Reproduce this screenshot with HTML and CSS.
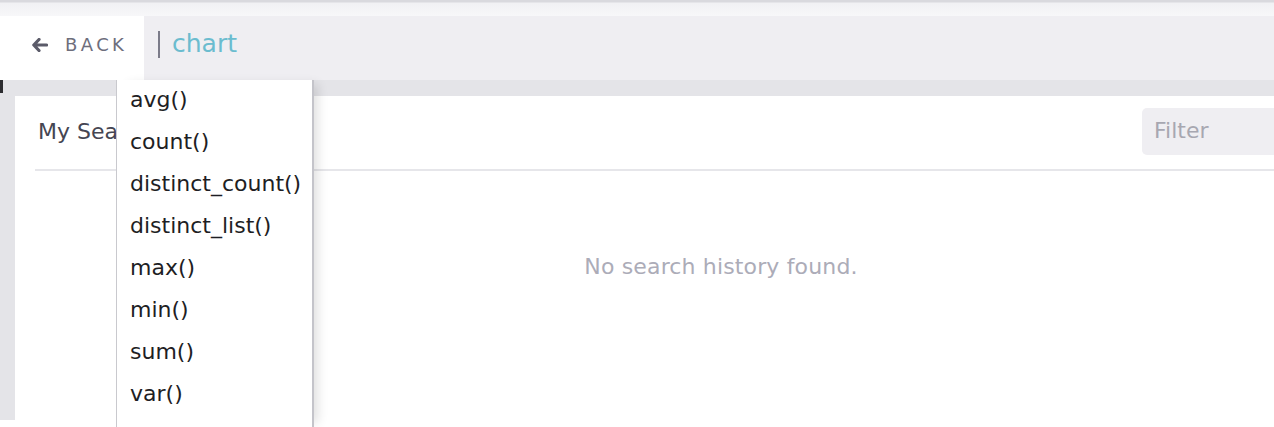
FILE: index.html
```html
<!DOCTYPE html>
<html>
<head>
<meta charset="utf-8">
<link rel="stylesheet" href="styles.css">
</head>
<body>
<div class="page">
  <div class="topstrip"></div>
  <header class="header">
    <div class="back">
      <svg class="back-icon" width="16" height="14" viewBox="0 0 16 14"><path d="M7 1.5 L1.8 7 L7 12.5 M2.5 7 H14.5" fill="none" stroke="#5b5b69" stroke-width="3.2" stroke-linecap="round" stroke-linejoin="round"/></svg>
      <span class="back-label">BACK</span>
    </div>
    <div class="search">
      <span class="caret"></span>
      <span class="query">chart</span>
    </div>
  </header>
  <main class="main">
    <section class="panel">
      <div class="panel-head">
        <h2 class="panel-title">My Searches</h2>
        <div class="filter">Filter</div>
      </div>
      <div class="empty">No search history found.</div>
    </section>
  </main>
  <div class="bottomstrip"></div>
  <ul class="dropdown">
    <li>avg()</li>
    <li>count()</li>
    <li>distinct_count()</li>
    <li>distinct_list()</li>
    <li>max()</li>
    <li>min()</li>
    <li>sum()</li>
    <li>var()</li>
  </ul>
</div>
</body>
</html>
```

FILE: styles.css
```css
html, body {
  margin: 0;
  padding: 0;
  overflow: hidden;
  background: #ffffff;
}
body {
  font-family: "DejaVu Sans", "Noto Sans", sans-serif;
  width: 1274px;
  height: 427px;
}
.page {
  position: relative;
  width: 1442px;
  height: 427px;
}
.topstrip {
  height: 16px;
  background: linear-gradient(#d9d9de 0, #d9d9de 2px, #f1f1f4 3px, #f7f7f9 16px);
}
.header {
  display: flex;
  height: 64px;
}
.back {
  width: 144px;
  box-sizing: border-box;
  padding: 0 0 7px 32px;
  display: flex;
  align-items: center;
  background: #ffffff;
}
.back-icon {
  display: block;
}
.back-label {
  margin-left: 17px;
  font-size: 18px;
  line-height: 24px;
  letter-spacing: 3.4px;
  color: #6e6e7c;
}
.search {
  flex: 1;
  display: flex;
  align-items: center;
  background: #efeef2;
  padding: 0 0 7px 14px;
}
.caret {
  width: 2px;
  height: 27px;
  background: #7b7b89;
  margin-right: 12px;
}
.query {
  font-size: 25px;
  line-height: 30px;
  color: #6bbccf;
  padding-bottom: 2px;
}
.main {
  background: #e4e4e8;
  height: 324px;
  padding: 16px 15px 0 15px;
  border-left: 2px solid transparent;
  position: relative;
}
.main::before {
  content: "";
  position: absolute;
  left: -2px;
  top: 0;
  width: 3px;
  height: 13px;
  background: #2c2c30;
}
.panel {
  background: #ffffff;
  height: 100%;
  padding: 10px 0 0 20px;
  box-sizing: border-box;
  margin-left: -2px;
}
.panel-head {
  display: flex;
  align-items: center;
  justify-content: space-between;
  height: 47px;
  padding: 2px 15px 14px 3px;
  border-bottom: 2px solid #e6e6ea;
}
.panel-title {
  margin: 0;
  font-size: 22px;
  line-height: 28px;
  font-weight: normal;
  color: #454552;
}
.filter {
  width: 270px;
  height: 47px;
  box-sizing: border-box;
  padding: 0 12px 3px;
  display: flex;
  align-items: center;
  background: #efeef2;
  border-radius: 5px;
  font-size: 22px;
  color: #a7a7b1;
}
.empty {
  text-align: center;
  margin-top: 82px;
  margin-left: -20px;
  font-size: 22px;
  line-height: 28px;
  color: #acacb8;
  letter-spacing: 0.15px;
}
.bottomstrip {
  height: 7px;
  background: #ffffff;
}
.dropdown {
  position: absolute;
  left: 116px;
  top: 80px;
  width: 198px;
  height: 347px;
  box-sizing: border-box;
  margin: 0;
  padding: 0 0 0 13px;
  list-style: none;
  background: #ffffff;
  border-left: 1px solid #c9c9ce;
  border-right: 2px solid #c4c4ca;
  box-shadow: 8px 0 10px -4px rgba(0, 0, 0, 0.12);
}
.dropdown li {
  height: 42px;
  line-height: 40px;
  font-size: 22px;
  color: #1e1e24;
}
```
